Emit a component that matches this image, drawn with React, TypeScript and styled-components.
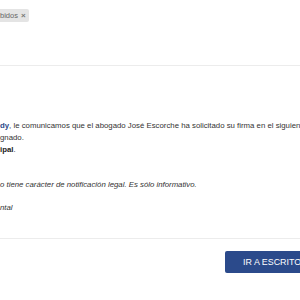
import React from "react";
import styled, { createGlobalStyle } from "styled-components";

const GlobalStyle = createGlobalStyle`
  html, body {
    margin: 0;
    padding: 0;
    background: #fff;
  }
  body {
    font-family: "Liberation Sans", Arial, sans-serif;
    color: #333;
  }
`;

const Page = styled.div`
  width: 300px;
  height: 300px;
  overflow: hidden;
  background: #fff;
`;

const Header = styled.div`
  height: 66px;
  box-sizing: border-box;
  padding-top: 4px;
  border-bottom: 1px solid #ececec;
`;

const Tag = styled.span`
  display: inline-flex;
  align-items: center;
  gap: 3px;
  height: 13px;
  padding: 0 3px 0 0;
  background: #e4e4e4;
  border-radius: 0 2px 2px 0;
  font-size: 7.5px;
  color: #666;
`;

const Close = styled.span`
  font-size: 8px;
  font-weight: bold;
  color: #777;
`;

const Body = styled.div`
  padding: 54px 0 24px;
  border-bottom: 1px solid #ececec;
  font-size: 7.8px;
  line-height: 12px;
  white-space: nowrap;
`;

const Para = styled.p<{ $gap?: number; $italic?: boolean }>`
  margin: ${(p) => p.$gap ?? 0}px 0 0;
  font-style: ${(p) => (p.$italic ? "italic" : "normal")};
`;

const Name = styled.b`
  color: #2b4a8b;
`;

const Strong = styled.b`
  color: #222;
`;

const Footer = styled.div`
  display: flex;
  justify-content: flex-end;
  padding-top: 12px;
`;

const Button = styled.button`
  flex-shrink: 0;
  height: 22px;
  margin-right: -55px;
  padding: 0 48px 0 18px;
  border: none;
  border-radius: 2px;
  background: #2b4a8b;
  color: #fff;
  font-family: "Liberation Sans", Arial, sans-serif;
  font-size: 8.9px;
  text-transform: uppercase;
`;

export default function App() {
  return (
    <Page>
      <GlobalStyle />
      <Header>
        <Tag>
          bidos <Close>×</Close>
        </Tag>
      </Header>
      <Body>
        <Para>
          <Name>dy</Name>, le comunicamos que el abogado José Escorche ha solicitado su firma en el siguiente escrito
          <br />
          gnado.
          <br />
          <Strong>ipal</Strong>.
        </Para>
        <Para $gap={23} $italic>
          o tiene carácter de notificación legal. Es sólo informativo.
        </Para>
        <Para $gap={11} $italic>
          ntal
        </Para>
      </Body>
      <Footer>
        <Button>Ir a escritos</Button>
      </Footer>
    </Page>
  );
}
